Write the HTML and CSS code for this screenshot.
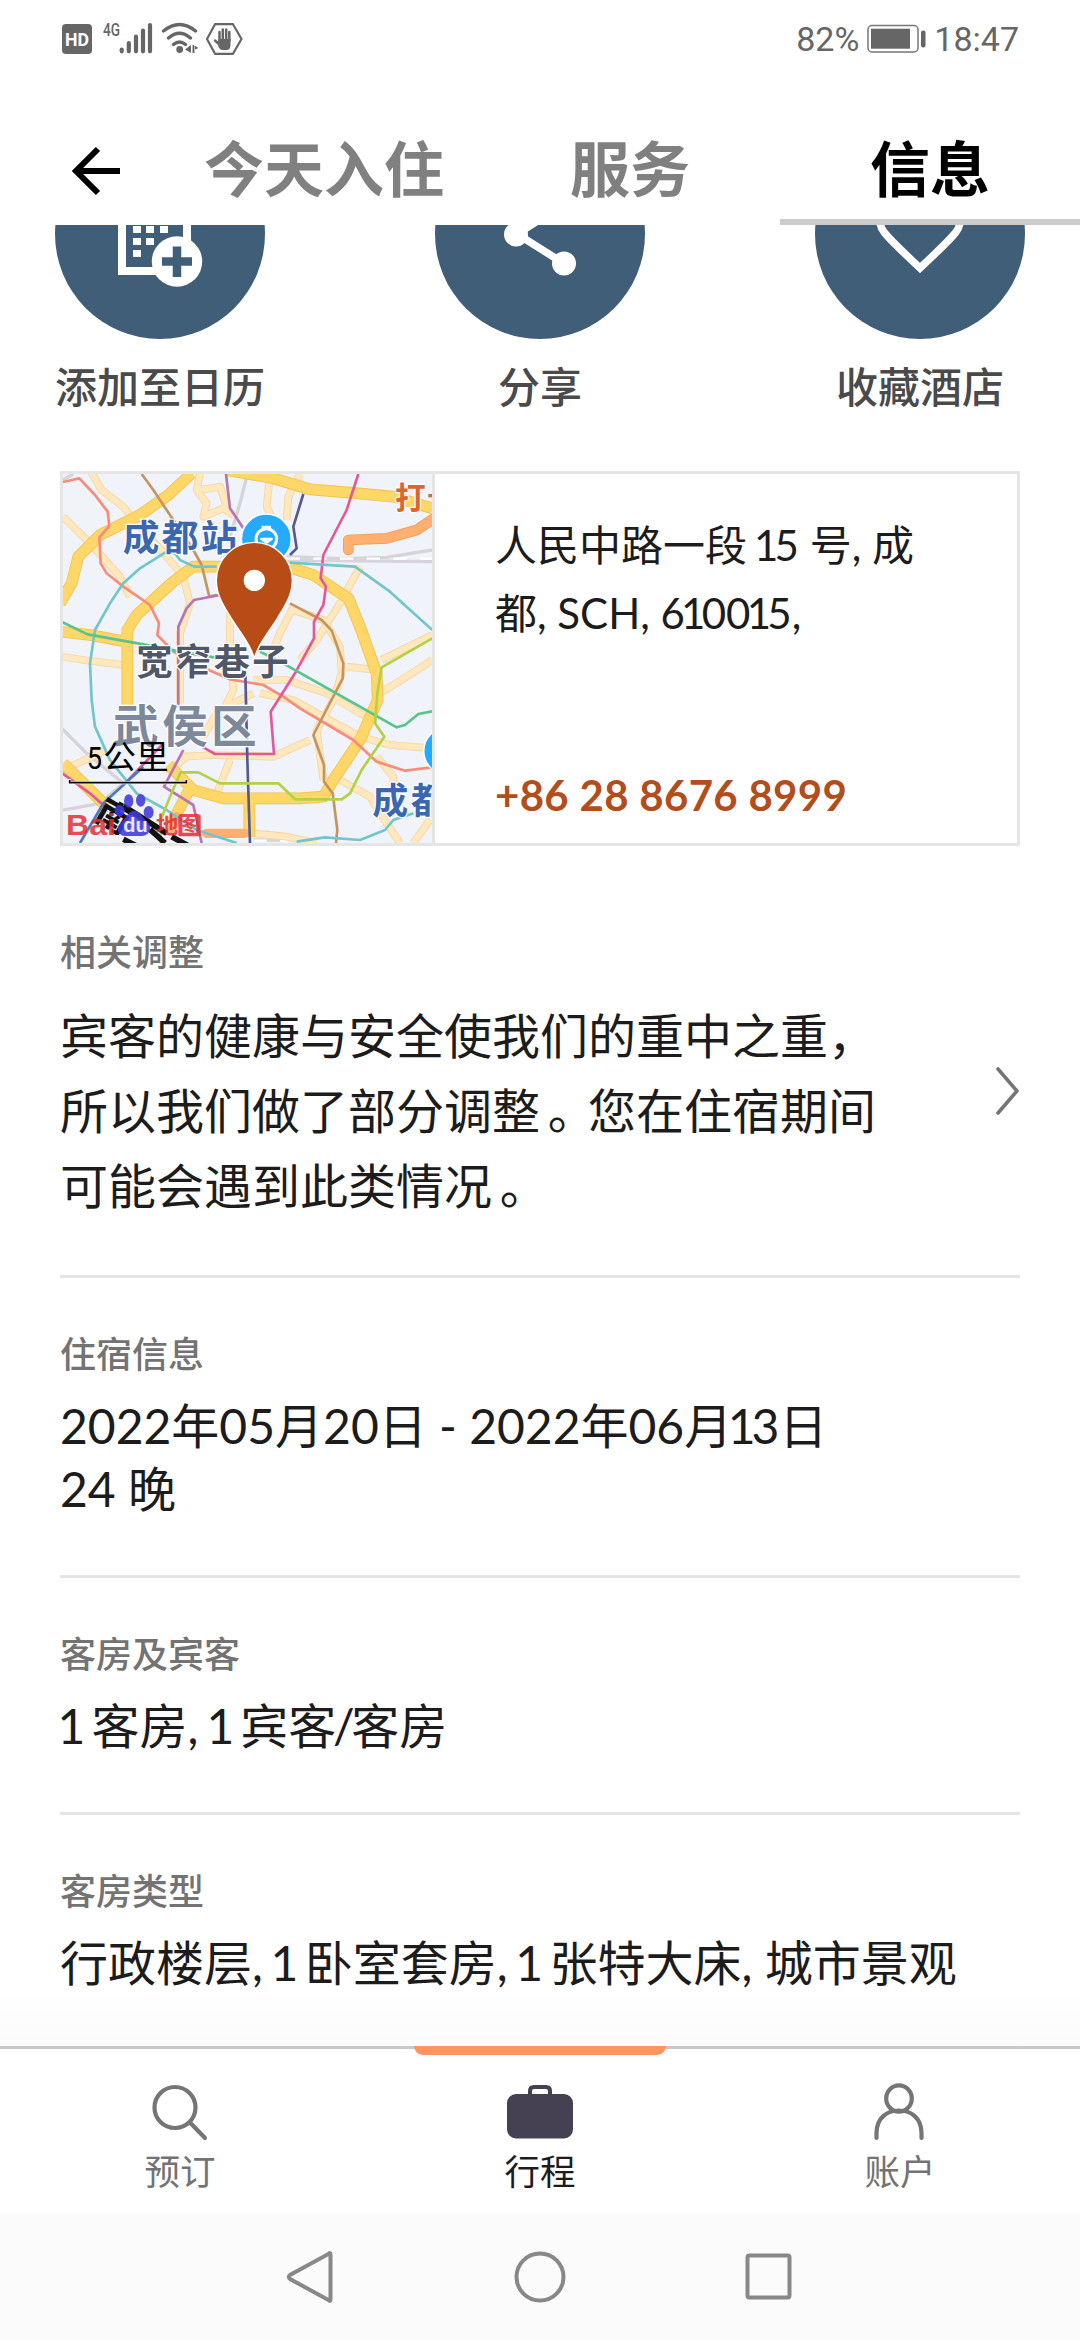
FILE: index.html
```html
<!DOCTYPE html>
<html lang="zh-CN">
<head>
<meta charset="utf-8">
<title>行程信息</title>
<link rel="stylesheet" href="styles.css">
</head>
<body>
<div class="screen">
  <div class="status">
    <svg class="status-icons" viewBox="0 0 190 40" width="190" height="40">
      <rect x="2" y="5" width="30" height="30" rx="4" fill="#666"/>
      <text class="hd" x="17" y="26.500" text-anchor="middle" textLength="24" lengthAdjust="spacingAndGlyphs">HD</text>
      <text class="net" x="43" y="17" textLength="17" lengthAdjust="spacingAndGlyphs">4G</text>
      <g stroke="#666" stroke-width="4.200" stroke-linecap="round">
        <path d="M61.700 30.500v1.800M68.800 24v8.300M76 17.500v14.800M83 11.500v20.800M90 6v26.300"/>
      </g>
      <g fill="none" stroke="#666" stroke-width="3.400" stroke-linecap="round">
        <path d="M103.500 12q16-13 32 0M108.500 19q11-9.500 22 0M113.500 25.500q6-5 12 0"/>
      </g>
      <circle cx="119.700" cy="30.500" r="3.400" fill="#666"/>
      <path d="M131 26v8l-6-3.500zM132.500 26v8h2v-8zM134 26l4.500 3-4.500 2z" fill="#666"/>
      <path d="M155 5.200h18l8.500 14.800-8.500 14.800h-18L147 20z" fill="none" stroke="#666" stroke-width="2.200" stroke-linejoin="round"/>
      <g stroke="#666" stroke-linecap="round" stroke-width="2.500" fill="none">
        <path d="M159.500 13v9M162.800 10.500v11M166.200 10.500v11M169.300 13v9M155 21.500l5 4.500"/>
      </g>
      <path d="M158.300 20h12.200v6q0 5-4 5h-4q-3 0-4.200-4z" fill="#666"/>
    </svg>
    <div class="status-right">
      <span class="pct">82%</span>
      <svg viewBox="0 0 60 30" width="60" height="30">
        <rect x="1" y="1.500" width="50" height="26.500" rx="4" fill="none" stroke="#777" stroke-width="1.500"/>
        <rect x="4" y="4.700" width="39" height="20" fill="#666"/>
        <rect x="54" y="6.500" width="4.500" height="17" rx="2" fill="#666"/>
      </svg>
      <span class="time">18:47</span>
    </div>
  </div>

  <header class="tabs">
    <div class="back">
      <svg viewBox="0 0 50 50" width="50" height="50"><path d="M49 25H5M27 3L5 25l22 22" fill="none" stroke="#000" stroke-width="6"/></svg>
    </div>
    <div class="tab">今天入住</div>
    <div class="tab">服务</div>
    <div class="tab active">信息</div>
  </header>

  <main class="content">
    <div class="actions">
      <div class="action">
        <svg class="disc" viewBox="0 0 210 114" width="210" height="114">
          <circle cx="105" cy="9" r="105" fill="#415e79"/>
          <path d="M67 -40V46H132V-40" fill="none" stroke="#fff" stroke-width="8"/>
          <g fill="#fff">
            <path d="M78 1h8v7h-8zM91 1h8v7h-8zM105 1h8v7h-8zM78 13h8v7h-8zM91 13h8v7h-8zM78 25h8v7h-8z"/>
            <circle cx="122" cy="36.500" r="25.200"/>
          </g>
          <path d="M122 21.500v30.500M107 36.500h30" stroke="#415e79" stroke-width="8.500"/>
        </svg>
        <span class="action-label">添加至日历</span>
      </div>
      <div class="action">
        <svg class="disc" viewBox="0 0 210 114" width="210" height="114">
          <circle cx="105" cy="9" r="105" fill="#415e79"/>
          <path d="M129 -21L82 9l47 29.500" fill="none" stroke="#fff" stroke-width="7.500"/>
          <circle cx="81" cy="9.500" r="12" fill="#fff"/>
          <circle cx="129" cy="38.500" r="12" fill="#fff"/>
        </svg>
        <span class="action-label">分享</span>
      </div>
      <div class="action">
        <svg class="disc" viewBox="0 0 210 114" width="210" height="114">
          <circle cx="105" cy="9" r="105" fill="#415e79"/>
          <path d="M105 -22C84 -46 54 -12 69 7Q74 14 105 43Q136 14 141 7C156 -12 126 -46 105 -22z" fill="none" stroke="#fff" stroke-width="7.500"/>
        </svg>
        <span class="action-label">收藏酒店</span>
      </div>
    </div>

    <div class="card">
      <svg class="map" viewBox="69 42 1107 1107" width="369" height="369" fill="none" stroke-linejoin="round">
        <rect x="69" y="42" width="1107" height="1107" fill="#f0f3fa"/>
        <g stroke="#d6d4da" stroke-width="10">
          <path d="M620 50L600 130 570 230M740 290L900 296 1040 292 1177 270M740 300L1177 305M60 800L140 880 250 970 180 1030 60 1052M1177 1060L1120 1149M69 60L100 42M640 1140H770"/>
        </g>
        <path d="M740 296H1177M640 1142H770" stroke="#fff" stroke-width="7" stroke-dasharray="40 40"/>
        <g stroke="#f8d49c" stroke-width="23">
          <path d="M150 30L185 90 250 140 300 200 380 290 430 350 450 430M69 170L150 250 240 350 270 410M480 42L470 90 500 130 490 170 550 145 580 165M480 90L540 80 560 140M690 42L680 140 700 180M780 42L745 110 740 180M69 590L130 600 250 615M570 440V560L580 690 555 740M960 320L900 430 830 540 780 600M760 440L720 520 690 590M640 660L740 660 860 700 960 760 1010 780M660 700L760 720 850 770 960 830 1050 855 1177 865M920 620L1010 630M1020 700L1100 650 1177 600M1025 600L1177 525M430 890L520 885 700 890 810 840M530 760L490 830M560 740L640 700M570 900L530 1000M380 940L440 890M640 1120L740 1130 830 1149M900 960L990 1010 1040 1090 1080 1149M1177 1070L1120 1149M69 930L200 870M450 430L420 520V730M760 450L850 480 900 560 905 640 880 720 830 810 850 960M1010 890L1060 950 1060 1010"/>
        </g>
        <g stroke="#ffe8bd" stroke-width="18">
          <path d="M150 30L185 90 250 140 300 200 380 290 430 350 450 430M69 170L150 250 240 350 270 410M480 42L470 90 500 130 490 170 550 145 580 165M480 90L540 80 560 140M690 42L680 140 700 180M780 42L745 110 740 180M69 590L130 600 250 615M570 440V560L580 690 555 740M960 320L900 430 830 540 780 600M760 440L720 520 690 590M640 660L740 660 860 700 960 760 1010 780M660 700L760 720 850 770 960 830 1050 855 1177 865M920 620L1010 630M1020 700L1100 650 1177 600M1025 600L1177 525M430 890L520 885 700 890 810 840M530 760L490 830M560 740L640 700M570 900L530 1000M380 940L440 890M640 1120L740 1130 830 1149M900 960L990 1010 1040 1090 1080 1149M1177 1070L1120 1149M69 930L200 870M450 430L420 520V730M760 450L850 480 900 560 905 640 880 720 830 810 850 960M1010 890L1060 950 1060 1010"/>
        </g>
        <g stroke="#f3c048" stroke-width="35">
          <path d="M60 430L95 370 115 290 180 225 300 165 385 105 455 40M560 30L700 55 810 88 930 98 1060 110 1177 145M262 750V510L290 465 350 410 400 365 460 320H560M740 320L820 345 925 415 960 500 1010 640 1013 720 960 840 880 960 850 1010 780 1015H550L460 990 385 915M60 515L150 525 260 545M628 1010V1130M450 985L390 1100M69 910L150 990 200 1040"/>
        </g>
        <g stroke="#ffd768" stroke-width="30">
          <path d="M60 430L95 370 115 290 180 225 300 165 385 105 455 40M560 30L700 55 810 88 930 98 1060 110 1177 145M262 750V510L290 465 350 410 400 365 460 320H560M740 320L820 345 925 415 960 500 1010 640 1013 720 960 840 880 960 850 1010 780 1015H550L460 990 385 915M60 515L150 525 260 545M628 1010V1130M450 985L390 1100M69 910L150 990 200 1040"/>
        </g>
        <path d="M1190 170L1130 210 1040 235 925 240 925 270" stroke="#f59b54" stroke-width="32" stroke-linecap="round"/>
        <path d="M1190 170L1130 210 1040 235 925 240 925 270" stroke="#ffb070" stroke-width="27" stroke-linecap="round"/>
        <path d="M500 1120H615M410 1070L395 1110" stroke="#ffb070" stroke-width="28" stroke-linecap="round"/>
        <g stroke-width="8">
          <path d="M60 68L118 55 165 105 203 155 208 198 178 232 182 310 200 340 250 380 330 435 357 490 352 525 400 575 460 610 570 658 670 675 730 710 780 745 940 840 1010 905 1095 932 1177 922" stroke="#f98c78"/>
          <path d="M305 42L340 90 400 180 460 270 485 315 508 410 530 405M750 430L845 480 875 512 910 610 908 655 820 825 852 915 852 965 878 1000 892 1110 888 1149" stroke="#c49561"/>
          <path d="M558 42L570 145 610 205M540 405L462 420 440 445 415 500V740M430 870L372 980 460 1035 485 1149" stroke="#b775b3"/>
          <path d="M955 42L920 150 850 285 842 355 858 380 850 435 822 485V535L765 640 692 755 702 882H525L490 862M370 850L260 965M60 935L150 1000 200 1045" stroke="#e2599b"/>
          <path d="M790 102L760 200 770 265 750 285M616 640L622 900 630 1149" stroke="#555992"/>
          <path d="M530 320H462L420 300 405 280 380 275 300 325 250 370 210 430 165 510 150 610 155 720 165 800 210 900 290 1000 380 1050 470 1110 590 1149M750 308L945 320 1050 395 1177 510M770 1145L855 1132 960 1140 1035 1110 1060 1080 1120 1060" stroke="#72c5cb"/>
          <path d="M60 483L143 523 310 553 420 575 540 595M660 575L720 605 880 695 1070 802 1095 795 1135 762 1177 754" stroke="#57c48b"/>
          <path d="M1177 535L1025 622 1012 700 1005 790 1033 830 965 930 930 1000 905 1018H765L715 970H540L475 937H422L390 1010 362 1080V1149" stroke="#b4d145"/>
          <path d="M310 920L190 1030 120 1149" stroke="#4d78c3"/>
        </g>
        <circle cx="679" cy="237" r="75" fill="#24aaff" stroke="#fff" stroke-width="5"/>
        <circle cx="679" cy="237" r="31" stroke="#fff" stroke-width="9"/>
        <path d="M665 201H693M664 237H695L680 248z" stroke="#fff" stroke-width="7" fill="#fff"/>
        <circle cx="1222" cy="873" r="71" fill="#24aaff" stroke="#fff" stroke-width="5"/>
        <g class="map-text">
          <text x="248" y="274" font-size="110" letter-spacing="7" fill="#3b67af">成都站</text>
          <text x="289" y="645" font-size="109" letter-spacing="7" fill="#4f5769">宽窄巷子</text>
          <text x="219" y="850" font-size="137" letter-spacing="10" fill="#7d899b">武侯区</text>
          <text x="997" y="1061" font-size="108" letter-spacing="8" fill="#3b67af">成都</text>
          <text x="1065" y="146" font-size="92" fill="#dc652f">打</text>
        </g>
        <rect x="1165" y="102" width="20" height="10" fill="#dc652f"/>
        <path d="M643 588C627 545 605 520 578 478C552 435 531 405 531 361A112 112 0 0 1 755 361C755 405 734 435 708 478C681 520 659 545 643 588z" fill="#b84c16" stroke="#fff" stroke-width="8" class="pin"/>
        <circle cx="643" cy="361" r="32" fill="#fff"/>
        <text class="south" x="160" y="1076" transform="rotate(30 160 1076)">南</text>
        <path d="M250 1038L380 1120M330 1108L375 1149M250 1138L290 1158M395 1130L450 1160" stroke="#111" stroke-width="17"/>
        <g class="logo-red">
          <text x="78" y="1124" font-size="86" textLength="150" lengthAdjust="spacingAndGlyphs">Bai</text>
          <text x="348" y="1120" font-size="67">地图</text>
          <rect x="418" y="1068" width="61" height="58" stroke="#e02f35" stroke-width="6"/>
        </g>
        <g fill="#4039dc" opacity=".88">
          <ellipse cx="266" cy="1023" rx="14" ry="20"/>
          <ellipse cx="302" cy="1021" rx="14" ry="19"/>
          <ellipse cx="239" cy="1052" rx="15" ry="17"/>
          <ellipse cx="326" cy="1057" rx="15" ry="19"/>
          <path d="M283 1052C300 1052 308 1074 325 1088C340 1110 322 1130 300 1128H260C235 1130 225 1105 242 1088C258 1076 265 1052 283 1052z"/>
        </g>
        <text class="du" x="250" y="1117">du</text>
        <text class="scale-five" x="140" y="926" textLength="46" lengthAdjust="spacingAndGlyphs">5</text>
        <text class="scale-text" x="190" y="927">公里</text>
        <path d="M89 958V968H439V958" stroke="#fff" stroke-width="9"/>
        <path d="M89 960V968H439V960" stroke="#000" stroke-width="5" stroke-linejoin="miter"/>
      </svg>
      <div class="address">
        <p>人民中路一段 <i>1</i>5 号, 成<br>都, SCH, 6<i>1</i>00<i>1</i>5,</p>
        <a class="phone">+86 28 8676 8999</a>
      </div>
    </div>

    <section class="info notice">
      <div class="notice-body">
        <h2>相关调整</h2>
        <p>宾客的健康与安全使我们的重中之重，<br>所以我们做了部分调整<b>。</b>您在住宿期间<br>可能会遇到此类情况<b>。</b></p>
      </div>
      <svg class="chevron" viewBox="0 0 24 48" width="24" height="48"><path d="M2 2L21 24 2 46" fill="none" stroke="#757575" stroke-width="3.600" stroke-linecap="round" stroke-linejoin="round"/></svg>
    </section>
    <section class="info">
      <h2>住宿信息</h2>
      <p>2022年05月20日 - 2022年06月<i>1</i>3日<br>24 晚</p>
    </section>
    <section class="info">
      <h2>客房及宾客</h2>
      <p class="rooms"><i>1</i> 客房, <i>1</i> 宾客<span class="slash">/</span>客房</p>
    </section>
    <section class="info last">
      <h2>客房类型</h2>
      <p>行政楼层, <i>1</i> 卧室套房, <i>1</i> 张特大床, 城市景观</p>
    </section>
  </main>

  <nav class="bottom">
    <div class="item">
      <svg viewBox="0 0 70 60" width="70" height="60" fill="none" stroke="#757575" stroke-width="4.200" stroke-linecap="round"><circle cx="30" cy="25.500" r="20.500"/><path d="M45 40.500L60 56"/></svg>
      <span>预订</span>
    </div>
    <div class="item on">
      <svg viewBox="0 0 70 60" width="70" height="60"><path d="M25 14V9Q25 5 29 5H41Q45 5 45 9V14" fill="none" stroke="#454052" stroke-width="4"/><rect x="2" y="12" width="66" height="44.500" rx="9" fill="#454052"/></svg>
      <span>行程</span>
    </div>
    <div class="item">
      <svg viewBox="0 0 70 60" width="70" height="60" fill="none" stroke="#757575" stroke-width="4.200" stroke-linecap="round"><ellipse cx="34" cy="16.500" rx="12.800" ry="13.200"/><path d="M11.500 56V51C11.500 36 22 28.500 34 28.500S56.500 36 56.500 51V56"/></svg>
      <span>账户</span>
    </div>
  </nav>

  <div class="sysnav">
    <svg viewBox="0 0 60 60" width="60" height="60"><path d="M49.500 7.500V52.500Q49.500 55 47.500 53L9 32Q6.500 30 9 28L47.500 7Q49.500 5 49.500 7.500z"/></svg>
    <svg viewBox="0 0 60 60" width="60" height="60"><circle cx="30" cy="30" r="23.500"/></svg>
    <svg viewBox="0 0 60 60" width="60" height="60"><rect x="8.500" y="8.500" width="42" height="42" rx="2"/></svg>
  </div>
</div>
</body>
</html>
```

FILE: styles.css
```css
* { box-sizing: border-box; margin: 0; padding: 0; }

body {
  background: #fff;
  color: #1c1c1c;
  font-family: Lato, "Noto Sans CJK SC", sans-serif;
}

.screen {
  width: 1080px;
  height: 2340px;
  display: flex;
  flex-direction: column;
  overflow: hidden;
}

/* Status bar */
.status {
  height: 77px;
  padding: 0 61px 0 60px;
  display: flex;
  justify-content: space-between;
  align-items: center;
}
.status-icons .hd { font: 700 19px Roboto, sans-serif; fill: #fff; }
.status-icons .net { font: 500 19px Roboto, sans-serif; fill: #666; }
.status-right {
  display: flex;
  align-items: center;
  font: 400 34px/40px Roboto, sans-serif;
  color: #666;
}
.status-right svg { margin: 0 7px 0 8px; }

/* Tabs */
.tabs {
  height: 148px;
  display: grid;
  grid-template-columns: 168px 312px 300px 300px;
  text-align: center;
  font-size: 60px;
  font-weight: 700;
  color: #808080;
}
.back { padding: 69px 0 0 71px; text-align: left; line-height: 0; }
.tab { line-height: 90px; padding-top: 47px; }
.tab.active { color: #000; border-bottom: 6px solid #ccc; }

/* Content */
.content {
  flex: 1;
  min-height: 0;
  padding: 0 60px;
  background: linear-gradient(#fff, #fff 96.800%, #fbfbfb);
}
.actions {
  display: flex;
  justify-content: space-between;
  margin: 0 -5px;
  height: 246px;
}
.action { width: 210px; display: flex; flex-direction: column; align-items: center; }
.disc { display: block; }
.action-label {
  margin-top: 18px;
  font-size: 42px;
  line-height: 60px;
  font-weight: 500;
  color: #4a4a4a;
  white-space: nowrap;
}

.card { height: 375px; display: flex; border: 3px solid #e5e5e5; }
.map { flex: none; display: block; }
.address {
  flex: 1;
  border-left: 3px solid #e5e5e5;
  padding: 38px 0 14px 60px;
  display: flex;
  flex-direction: column;
  justify-content: space-between;
  font-size: 42px;
  line-height: 67.500px;
}
.phone { color: #b34e1c; font-weight: 700; letter-spacing: .3px; }

.pin { paint-order: stroke; }
.map-text {
  font-family: "Noto Sans CJK SC", sans-serif;
  font-weight: 700;
  stroke: #fff;
  stroke-width: 7px;
  paint-order: stroke;
}
.scale-text { font: 400 98px "Noto Sans CJK SC", sans-serif; fill: #000; }
.scale-five { font: 400 92px Roboto, sans-serif; fill: #000; }
.south { font: 900 100px "Noto Sans CJK SC", sans-serif; fill: #111; }
.logo-red { font-family: "Liberation Sans", "Noto Sans CJK SC", sans-serif; font-weight: 700; opacity: .85; }
.logo-red text { fill: #e02f35; }
.du { font: 700 60px "Liberation Sans", sans-serif; fill: #e8e8ff; }

/* Narrow figure one and shifted full stop */
i { font-style: normal; margin: 0 -.09em; }
p > i:first-child { margin-left: -.09em; }
.rooms > i:first-child { margin-left: -.05em; }
.rooms > i { margin-right: -.13em; }
.slash { margin: 0 -.07em; }
b { font-weight: 400; margin: 0 -.16em 0 .16em; }

.info { padding: 49px 0 55px; border-bottom: 3px solid #e5e5e5; }
.info h2 { font-size: 36px; line-height: 54px; font-weight: 500; color: #737373; }
.info p { margin-top: 13px; font-size: 48px; line-height: 63px; white-space: nowrap; }
.info.last { border: 0; }
.info.last i { margin: 0 -.12em 0 -.1em; }
.notice {
  padding: 79px 0 52px;
  display: flex;
  justify-content: space-between;
}
.info.notice { padding: 79px 0 52px; }
.info.notice p { margin-top: 19px; line-height: 75px; }
.chevron { margin-top: 142px; }

/* Bottom navigation */
.bottom {
  height: 168px;
  border-top: 3px solid #c8c8c8;
  display: grid;
  grid-template-columns: repeat(3, 1fr);
  color: #737373;
  background: #fff;
}
.item {
  position: relative;
  padding-top: 33px;
  display: flex;
  flex-direction: column;
  align-items: center;
  font-size: 35.500px;
  line-height: 54px;
}
.item span { margin-top: 3px; }
.on { color: #1c1c1c; }
.on::before {
  content: "";
  position: absolute;
  top: -3px;
  width: 252px;
  height: 9px;
  border-radius: 0 0 9px 9px;
  background: #ff945f;
}

.sysnav {
  height: 126px;
  background: #fbfbfb;
  display: flex;
  justify-content: center;
  align-items: center;
  gap: 169px;
}
.sysnav svg { fill: none; stroke: #888; stroke-width: 4px; }
```
